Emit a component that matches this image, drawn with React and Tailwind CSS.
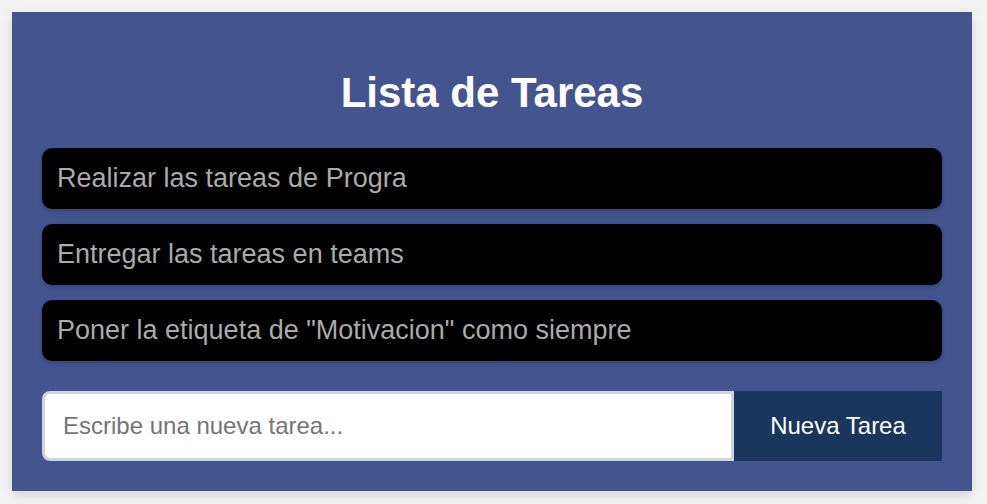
export default function App() {
  const tasks = [
    "Realizar las tareas de Progra",
    "Entregar las tareas en teams",
    'Poner la etiqueta de "Motivacion" como siempre',
  ];
  return (
    <div className="min-h-[504px] bg-[#f2f2f2] pt-[12px] pb-[13px] pl-[12px]" style={{ fontFamily: '"Liberation Sans", Arial, sans-serif' }}>
      <div className="w-[960px] bg-[#43548f] p-[30px] shadow-[0_4px_10px_rgba(0,0,0,0.12)]">
        <h1 className="mt-[27px] mb-[32px] text-center text-[42px] font-bold leading-[47px] text-white">Lista de Tareas</h1>
        <div className="flex flex-col gap-[15px]">
          {tasks.map((t) => (
            <div key={t} className="rounded-[10px] bg-black px-[15px] py-[15px] text-[27px] leading-[31px] text-[#aaaaaa] shadow-[0_2px_4px_rgba(0,0,0,0.2)]">
              {t}
            </div>
          ))}
        </div>
        <div className="mt-[30px] flex h-[70px]">
          <input
            type="text"
            placeholder="Escribe una nueva tarea..."
            className="h-full flex-1 rounded-l-[8px] border-[3px] border-[#cfd3db] bg-white px-[18px] text-[24px] text-black outline-none placeholder:text-[#757575]"
          />
          <button className="h-full w-[208px] bg-[#1a365c] text-[24px] text-white">Nueva Tarea</button>
        </div>
      </div>
    </div>
  );
}
